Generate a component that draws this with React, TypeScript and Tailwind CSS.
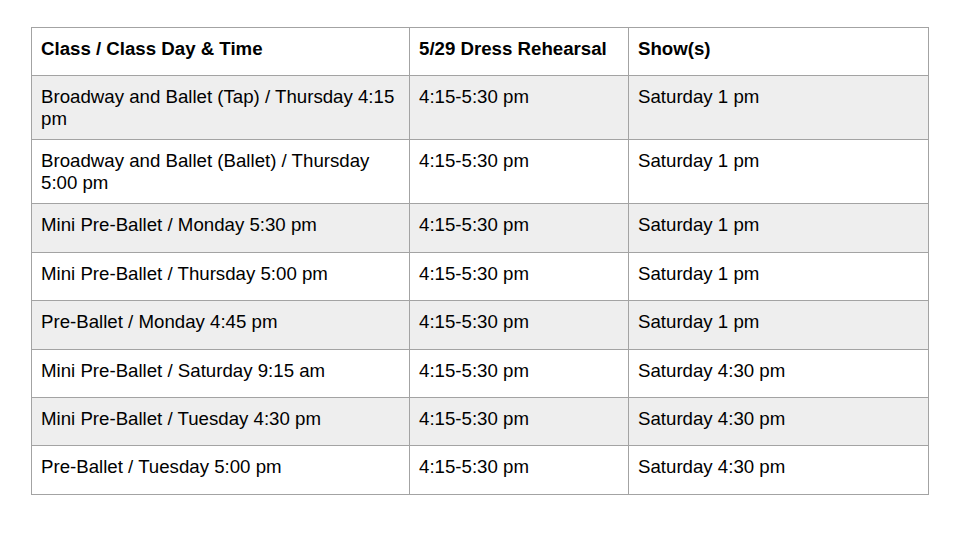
import React from 'react';

interface Row {
  cls: string;
  rehearsal: string;
  show: string;
}

const rows: Row[] = [
  { cls: 'Broadway and Ballet (Tap) / Thursday 4:15 pm', rehearsal: '4:15-5:30 pm', show: 'Saturday 1 pm' },
  { cls: 'Broadway and Ballet (Ballet) / Thursday 5:00 pm', rehearsal: '4:15-5:30 pm', show: 'Saturday 1 pm' },
  { cls: 'Mini Pre-Ballet / Monday 5:30 pm', rehearsal: '4:15-5:30 pm', show: 'Saturday 1 pm' },
  { cls: 'Mini Pre-Ballet / Thursday 5:00 pm', rehearsal: '4:15-5:30 pm', show: 'Saturday 1 pm' },
  { cls: 'Pre-Ballet / Monday 4:45 pm', rehearsal: '4:15-5:30 pm', show: 'Saturday 1 pm' },
  { cls: 'Mini Pre-Ballet / Saturday 9:15 am', rehearsal: '4:15-5:30 pm', show: 'Saturday 4:30 pm' },
  { cls: 'Mini Pre-Ballet / Tuesday 4:30 pm', rehearsal: '4:15-5:30 pm', show: 'Saturday 4:30 pm' },
  { cls: 'Pre-Ballet / Tuesday 5:00 pm', rehearsal: '4:15-5:30 pm', show: 'Saturday 4:30 pm' },
];

const cell = 'border border-[#a3a3a3] px-[9px] pt-[10px] pb-[10px] h-[48.4px] align-top text-left';

function App() {
  return (
    <div className="w-[960px] h-[540px] bg-white pl-[31px] pt-[27px] font-['Liberation_Sans',Arial,sans-serif] text-[18.67px] leading-[21.5px] text-black">
      <table className="table-fixed border-collapse w-[897px]">
        <colgroup>
          <col className="w-[378px]" />
          <col className="w-[219px]" />
          <col className="w-[300px]" />
        </colgroup>
        <thead>
          <tr>
            <th className={`${cell} font-bold`}>Class / Class Day &amp; Time</th>
            <th className={`${cell} font-bold`}>5/29 Dress Rehearsal</th>
            <th className={`${cell} font-bold`}>Show(s)</th>
          </tr>
        </thead>
        <tbody>
          {rows.map((r, i) => (
            <tr key={i} className={i % 2 === 0 ? 'bg-[#eeeeee]' : 'bg-white'}>
              <td className={cell}>{r.cls}</td>
              <td className={cell}>{r.rehearsal}</td>
              <td className={cell}>{r.show}</td>
            </tr>
          ))}
        </tbody>
      </table>
    </div>
  );
}

export default App;
